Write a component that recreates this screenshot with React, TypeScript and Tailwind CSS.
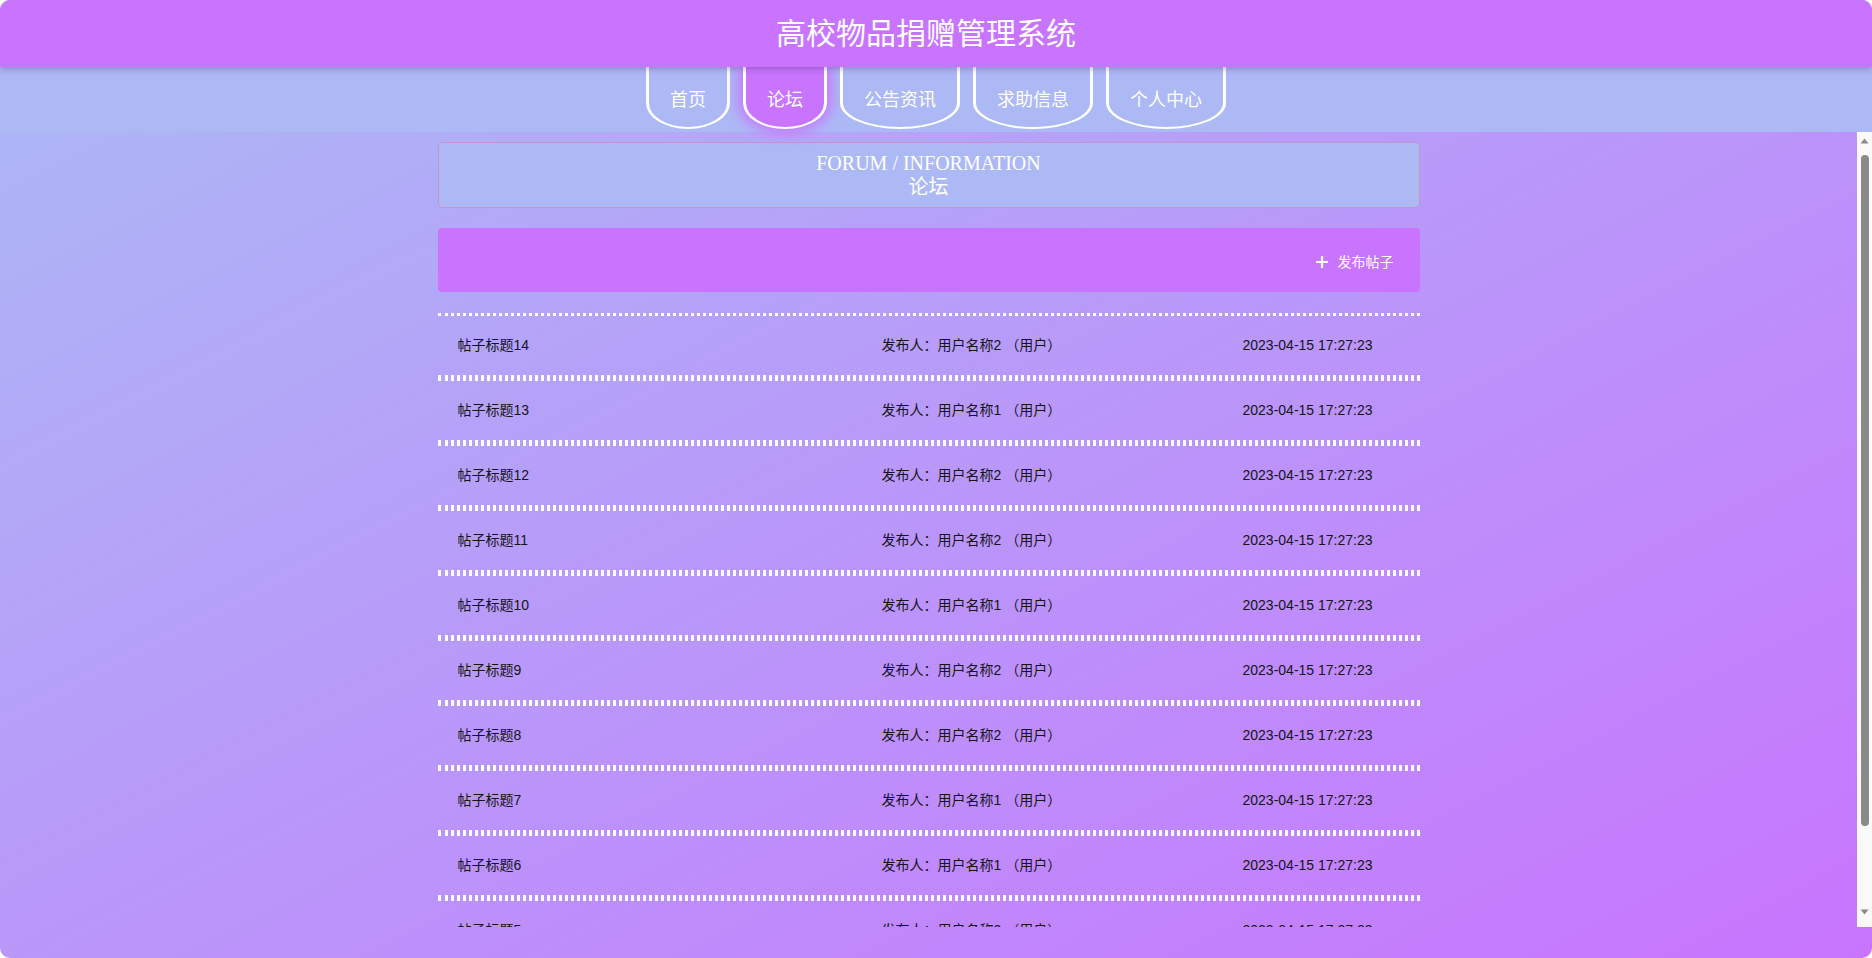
import React from "react";

const tabs = [
  { label: "首页", active: false },
  { label: "论坛", active: true },
  { label: "公告资讯", active: false },
  { label: "求助信息", active: false },
  { label: "个人中心", active: false },
];

const rows = [
  { t: "帖子标题14", u: "用户名称2" },
  { t: "帖子标题13", u: "用户名称1" },
  { t: "帖子标题12", u: "用户名称2" },
  { t: "帖子标题11", u: "用户名称2" },
  { t: "帖子标题10", u: "用户名称1" },
  { t: "帖子标题9", u: "用户名称2" },
  { t: "帖子标题8", u: "用户名称2" },
  { t: "帖子标题7", u: "用户名称1" },
  { t: "帖子标题6", u: "用户名称1" },
  { t: "帖子标题5", u: "用户名称2" },
];

function Scrollbar() {
  return (
    <div className="flex h-full w-[15px] shrink-0 flex-col bg-[#fafafa]">
      <div className="flex h-[17px] items-center justify-center">
        <svg width="9" height="6" viewBox="0 0 9 6">
          <path d="M4.5 0.5L8.5 5.5H0.5Z" fill="#8a8a8a" />
        </svg>
      </div>
      <div className="flex flex-1 flex-col items-center pt-[6px]">
        <div className="h-[671px] w-[8px] rounded-full bg-[#8a8a8a]" />
      </div>
      <div className="flex h-[21px] items-start justify-center pt-[3px]">
        <svg width="9" height="6" viewBox="0 0 9 6">
          <path d="M0.5 0.5H8.5L4.5 5.5Z" fill="#8a8a8a" />
        </svg>
      </div>
    </div>
  );
}

export default function App() {
  return (
    <div className="w-full bg-white">
      <div className="flex h-[958px] w-full flex-col overflow-hidden rounded-[10px] bg-[linear-gradient(to_bottom_right,#abbaf5,#c875fe)] font-['Liberation_Sans','Noto_Sans_CJK_SC',sans-serif]">
        <header className="relative z-20 flex h-[67px] shrink-0 items-center justify-center bg-[#c874fe] pr-[20px] text-[30px] text-white shadow-[0_2px_6px_rgba(80,40,120,0.35)]">
          高校物品捐赠管理系统
        </header>
        <nav className="relative z-10 flex h-[65px] shrink-0 items-start justify-center gap-[13px] bg-[#acb9f5]">
          {tabs.map((tab) => (
            <div
              key={tab.label}
              className={
                "flex h-[62px] items-center border-x-[3px] border-b-2 border-t-0 border-solid border-white px-[21px] pt-[6px] text-[18px] text-white [border-radius:0_0_50%_50%/0_0_42%_42%] " +
                (tab.active ? "bg-[#c874fe] shadow-[0_0_14px_4px_#c874fe]" : "")
              }
            >
              {tab.label}
            </div>
          ))}
        </nav>
        <main className="flex h-[795px] shrink-0">
          <div className="min-w-0 flex-1 overflow-hidden">
            <div className="mx-auto w-[982px] pb-[71px] pt-[10px]">
              <div className="flex h-[66px] flex-col items-center justify-center rounded-[5px] border border-solid border-[#c396c6] bg-[#acb9f5] font-['Liberation_Serif','Noto_Sans_CJK_SC',serif] text-[20px] leading-[24px] text-white">
                <div>FORUM / INFORMATION</div>
                <div>论坛</div>
              </div>
              <div className="mt-[20px] flex h-[64px] items-center justify-end rounded-[4px] bg-[#c874fe] pr-[26px] pt-[4px]">
                <div className="flex items-center gap-[9px] text-[14px] text-white">
                  <svg width="14" height="14" viewBox="0 0 14 14">
                    <path d="M7 1v12M1 7h12" stroke="white" strokeWidth="2.2" fill="none" />
                  </svg>
                  <span>发布帖子</span>
                </div>
              </div>
              <div className="mt-[21px]">
                {rows.map((r) => (
                  <div
                    key={r.t}
                    className="flex h-[65px] items-center border-y-[3px] border-dotted border-white px-[20px] text-[14px] text-[#151515]"
                  >
                    <div className="w-[424px]">{r.t}</div>
                    <div className="w-[361px]">发布人：{r.u} （用户）</div>
                    <div>2023-04-15 17:27:23</div>
                  </div>
                ))}
              </div>
            </div>
          </div>
          <Scrollbar />
        </main>
      </div>
    </div>
  );
}
